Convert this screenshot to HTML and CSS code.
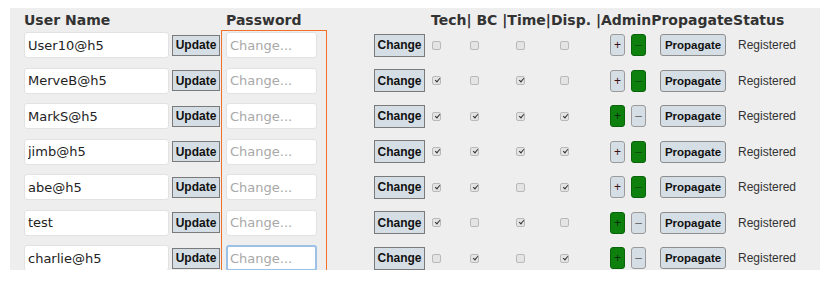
FILE: index.html
```html
<!DOCTYPE html>
<html lang="en">
<head>
  <meta charset="UTF-8" />
  <title>User Admin</title>
  <link rel="stylesheet" href="styles.css">
</head>
<body>
  <div class="frame">
    <div class="panel">
      <div class="head">
        <span class="th th-user">User Name</span>
        <span class="th th-pass">Password</span>
        <span class="th th-rest">Tech| BC |Time|Disp. |AdminPropagateStatus</span>
      </div>

      <div class="row">
        <input class="user" type="text" value="User10@h5" />
        <button class="btn btn-update">Update</button>
        <input class="pass" type="password" placeholder="Change..." />
        <button class="btn btn-change">Change</button>
        <span class="cb cb-tech"></span>
        <span class="cb cb-bc"></span>
        <span class="cb cb-time"></span>
        <span class="cb cb-disp"></span>
        <button class="pm plus">+</button>
        <button class="pm minus on">–</button>
        <button class="btn btn-prop">Propagate</button>
        <span class="status">Registered</span>
      </div>

      <div class="row">
        <input class="user" type="text" value="MerveB@h5" />
        <button class="btn btn-update">Update</button>
        <input class="pass" type="password" placeholder="Change..." />
        <button class="btn btn-change">Change</button>
        <span class="cb cb-tech checked"></span>
        <span class="cb cb-bc"></span>
        <span class="cb cb-time checked"></span>
        <span class="cb cb-disp"></span>
        <button class="pm plus">+</button>
        <button class="pm minus on">–</button>
        <button class="btn btn-prop">Propagate</button>
        <span class="status">Registered</span>
      </div>

      <div class="row">
        <input class="user" type="text" value="MarkS@h5" />
        <button class="btn btn-update">Update</button>
        <input class="pass" type="password" placeholder="Change..." />
        <button class="btn btn-change">Change</button>
        <span class="cb cb-tech checked"></span>
        <span class="cb cb-bc checked"></span>
        <span class="cb cb-time checked"></span>
        <span class="cb cb-disp checked"></span>
        <button class="pm plus on">+</button>
        <button class="pm minus">–</button>
        <button class="btn btn-prop">Propagate</button>
        <span class="status">Registered</span>
      </div>

      <div class="row">
        <input class="user" type="text" value="jimb@h5" />
        <button class="btn btn-update">Update</button>
        <input class="pass" type="password" placeholder="Change..." />
        <button class="btn btn-change">Change</button>
        <span class="cb cb-tech checked"></span>
        <span class="cb cb-bc checked"></span>
        <span class="cb cb-time checked"></span>
        <span class="cb cb-disp checked"></span>
        <button class="pm plus">+</button>
        <button class="pm minus on">–</button>
        <button class="btn btn-prop">Propagate</button>
        <span class="status">Registered</span>
      </div>

      <div class="row">
        <input class="user" type="text" value="abe@h5" />
        <button class="btn btn-update">Update</button>
        <input class="pass" type="password" placeholder="Change..." />
        <button class="btn btn-change">Change</button>
        <span class="cb cb-tech checked"></span>
        <span class="cb cb-bc checked"></span>
        <span class="cb cb-time"></span>
        <span class="cb cb-disp checked"></span>
        <button class="pm plus">+</button>
        <button class="pm minus on">–</button>
        <button class="btn btn-prop">Propagate</button>
        <span class="status">Registered</span>
      </div>

      <div class="row">
        <input class="user" type="text" value="test" />
        <button class="btn btn-update">Update</button>
        <input class="pass" type="password" placeholder="Change..." />
        <button class="btn btn-change">Change</button>
        <span class="cb cb-tech checked"></span>
        <span class="cb cb-bc"></span>
        <span class="cb cb-time checked"></span>
        <span class="cb cb-disp"></span>
        <button class="pm plus on">+</button>
        <button class="pm minus">–</button>
        <button class="btn btn-prop">Propagate</button>
        <span class="status">Registered</span>
      </div>

      <div class="row">
        <input class="user" type="text" value="charlie@h5" />
        <button class="btn btn-update">Update</button>
        <input class="pass focused" type="password" placeholder="Change..." />
        <button class="btn btn-change">Change</button>
        <span class="cb cb-tech"></span>
        <span class="cb cb-bc checked"></span>
        <span class="cb cb-time"></span>
        <span class="cb cb-disp checked"></span>
        <button class="pm plus on">+</button>
        <button class="pm minus">–</button>
        <button class="btn btn-prop">Propagate</button>
        <span class="status">Registered</span>
      </div>
    </div>
    <div class="highlight"></div>
  </div>
</body>
</html>
```

FILE: styles.css
```css
body {
  margin: 8px 0 0 10px;
  background-color: #ffffff;
  font-family: "DejaVu Sans", sans-serif;
}

.frame {
  position: relative;
  width: 810px;
}

.panel {
  background-color: #eeeeee;
  height: 262px;
  overflow: hidden;
  padding: 3px 0 0 14px;
  box-sizing: border-box;
  display: flex;
  flex-direction: column;
  gap: 9.5px;
}

.head {
  display: flex;
  height: 18px;
  line-height: 18px;
  margin-bottom: -6.5px;
}

.th {
  font-family: "DejaVu Sans", sans-serif;
  font-weight: bold;
  font-size: 14px;
  color: #333333;
  white-space: nowrap;
}

.th-user {
  width: 202px;
}

.th-pass {
  width: 205px;
}

.row {
  display: flex;
  align-items: center;
  height: 26px;
  flex-shrink: 0;
}

.user, .pass {
  height: 26px;
  box-sizing: border-box;
  border: 1px solid #e2e2e2;
  border-radius: 3px;
  background-color: #ffffff;
  padding: 0 0 0 3px;
  font-family: "DejaVu Sans", sans-serif;
  font-size: 13px;
  color: #222222;
  outline: none;
}

.user {
  width: 145px;
}

.pass {
  width: 91px;
  margin-left: 6px;
}

.pass::placeholder {
  color: #a8a8a8;
}

.pass.focused {
  border: 2px solid #9cc0e6;
  padding-left: 2px;
}

.btn {
  font-family: "Liberation Sans", Arial, sans-serif;
  font-weight: bold;
  font-size: 12px;
  color: #111111;
  background-color: #d5dee5;
  border: 1px solid #7a7a7a;
  padding: 0;
  box-sizing: border-box;
}

.btn-update {
  width: 48px;
  height: 21px;
  margin-left: 3px;
  border-radius: 0;
}

.btn-change {
  width: 51px;
  height: 23px;
  margin-left: 57px;
  border-radius: 0;
}

.btn-prop {
  width: 66px;
  height: 22px;
  margin-left: 14px;
  border-radius: 3px;
  border-color: #8d8d8d;
  font-size: 11.5px;
}

.cb {
  position: relative;
  width: 9px;
  height: 9px;
  box-sizing: border-box;
  border: 1px solid #b9b9b9;
  border-radius: 2px;
  background-color: #e4e4e4;
}

.cb.checked::after {
  content: "";
  position: absolute;
  left: 2.5px;
  top: 0px;
  width: 2px;
  height: 4px;
  border-right: 1.5px solid #333333;
  border-bottom: 1.5px solid #333333;
  transform: rotate(40deg);
}

.cb-tech {
  margin-left: 7px;
}

.cb-bc {
  margin-left: 29px;
}

.cb-time {
  margin-left: 37px;
}

.cb-disp {
  margin-left: 35px;
}

.pm {
  width: 15px;
  height: 22px;
  box-sizing: border-box;
  border: 1px solid #9a9a9a;
  border-radius: 3px;
  background-color: #d5dee5;
  padding: 0;
  font-family: "Liberation Sans", Arial, sans-serif;
  font-size: 12px;
  line-height: 20px;
}

.plus {
  margin-left: 41px;
  color: #3d1010;
}

.minus {
  margin-left: 6px;
  color: #666666;
}

.pm.on {
  background-color: #0e800e;
  border-color: #0a620a;
}

.plus.on {
  color: #0b2b0b;
}

.minus.on {
  color: #0a4f0a;
}

.status {
  margin-left: 12px;
  font-family: "Liberation Sans", Arial, sans-serif;
  font-size: 12px;
  color: #333333;
}

.highlight {
  position: absolute;
  left: 211px;
  top: 22px;
  width: 104px;
  height: 241px;
  border: 1px solid #f0712a;
}
```
